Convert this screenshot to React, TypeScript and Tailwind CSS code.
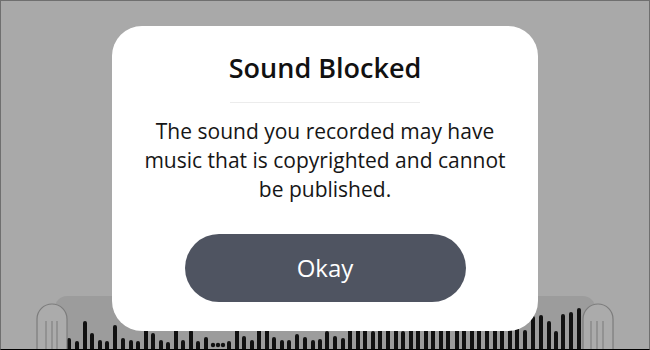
const bars: [number, number][] = [
  [69, 339], [77, 342], [85, 322], [92, 334], [100, 341], [107, 342], [115, 326], [123, 339],
  [131, 341], [138, 342], [146, 330], [153, 334], [161, 341], [168, 343], [176, 330], [183, 341],
  [191, 331], [198, 342], [206, 338], [229, 342], [237, 329], [244, 337], [252, 341], [259, 329],
  [267, 329], [274, 338], [282, 341], [289, 341], [297, 335], [305, 338], [313, 341], [320, 340],
  [327, 332], [335, 337], [343, 339], [350, 318], [358, 316], [365, 320], [373, 332], [380, 318],
  [388, 314], [396, 320], [403, 332], [411, 316], [418, 314], [426, 318], [433, 315], [441, 314],
  [448, 318], [457, 314], [464, 316], [472, 312], [479, 314], [487, 312], [495, 315], [502, 313],
  [510, 315], [517, 320], [525, 331], [533, 317], [541, 316], [549, 322], [556, 332], [563, 315],
  [571, 313], [579, 309],
];

const dots = [213, 218, 223];

function Waveform() {
  return (
    <svg width="648" height="55" viewBox="1 295 648 55" className="block">
      <rect x="55" y="297" width="540" height="70" rx="12" fill="#9c9c9c" />
      {bars.map(([x, top]) => (
        <rect key={x} x={x - 2} y={top} width="4" height={352 - top} rx="2" fill="#111" />
      ))}
      {dots.map((x) => (
        <circle key={x} cx={x} cy={346} r="2.2" fill="#111" />
      ))}
      {[
        { x: 37, lines: [46, 52, 57] },
        { x: 583, lines: [591, 597, 603] },
      ].map((h) => (
        <g key={h.x}>
          <path
            d={`M${h.x} 352 V320 A15 15 0 0 1 ${h.x + 30} 320 V352 Z`}
            fill="#ababab"
            stroke="#7c7c7c"
            strokeWidth="1.2"
          />
          {h.lines.map((lx) => (
            <line key={lx} x1={lx} y1={322} x2={lx} y2={352} stroke="#8a8a8a" strokeWidth="1.5" />
          ))}
        </g>
      ))}
    </svg>
  );
}

export default function App() {
  return (
    <div className="relative w-[650px] h-[350px] overflow-hidden bg-[#a9a9a9] border border-[#6f6f6f] border-b-black flex flex-col justify-end font-['Open_Sans','Noto_Sans',sans-serif]">
      <Waveform />

      <div className="absolute left-[111px] top-[25px] w-[426px] h-[305px] bg-white rounded-[30px] flex flex-col items-center pt-[27px]">
        <h2 className="text-[27px] leading-[30px] font-semibold text-[#111]">Sound Blocked</h2>
        <div className="mt-[19px] w-[190px] h-px bg-[#ececec]" />
        <p className="mt-[14px] w-[380px] text-center text-[21px] leading-[29px] text-[#161616]">
          The sound you recorded may have music that is copyrighted and cannot be published.
        </p>
        <button className="mt-[30px] w-[281px] h-[68px] rounded-full bg-[#4f5461] text-white text-[24px]">
          Okay
        </button>
      </div>
    </div>
  );
}
